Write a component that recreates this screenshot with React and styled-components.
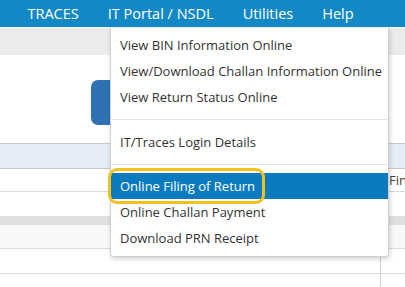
import React from "react";
import styled, { createGlobalStyle } from "styled-components";

const Global = createGlobalStyle`
  html, body { margin: 0; padding: 0; background: #fff; }
  body { font-family: "Open Sans", "Noto Sans", Arial, sans-serif; overflow: hidden; }
  #root { width: 405px; height: 287px; position: relative; overflow: hidden; }
`;

const Page = styled.div`
  position: relative;
  width: 405px;
  height: 287px;
  overflow: hidden;
`;

const NavBar = styled.nav`
  height: 27px;
  background: #1289c5;
  display: flex;
  align-items: center;
  padding-left: 13px;
  border-bottom: 1px solid #f4f4f4;
`;

const NavItem = styled.span`
  color: #fff;
  font-size: 14.5px;
  padding: 0 14.5px;
  line-height: 27px;
  white-space: nowrap;
`;

const SubBar = styled.div`
  height: 27px;
  background: #ebebeb;
`;

const Hero = styled.div`
  height: 88px;
  display: flex;
  align-items: flex-start;
  padding-top: 25px;
  padding-left: 91px;
  box-sizing: border-box;
`;

const BigButton = styled.div`
  width: 120px;
  height: 45px;
  background: #2f72b3;
  border-radius: 7px;
`;

const Table = styled.div`
  display: flex;
  flex-direction: column;
`;

const Row = styled.div`
  height: ${(p) => p.$h}px;
  background: ${(p) => p.$bg || "#fff"};
  border-bottom: 1px solid ${(p) => p.$line || "#dadada"};
  box-sizing: border-box;
  display: flex;
  border-top: ${(p) => (p.$top ? "1px solid #c8c8c8" : "none")};
`;

const Cell = styled.div`
  flex: ${(p) => (p.$w ? `0 0 ${p.$w}px` : "1")};
  border-right: ${(p) => (p.$divider ? "1px solid #cfcfcf" : "none")};
  font-size: 13px;
  color: #444;
  padding-left: ${(p) => p.$pl || 0}px;
  display: flex;
  align-items: center;
  white-space: nowrap;
  overflow: hidden;
`;

const Gap = styled.div`
  height: 8px;
  background: #e0e0e0;
`;

const Menu = styled.ul`
  position: absolute;
  left: 110px;
  top: 28px;
  width: 279px;
  margin: 0;
  padding: 4px 0 5px;
  list-style: none;
  background: #fff;
  border: 1px solid #d0d0d0;
  border-top: none;
  border-radius: 0 0 4px 4px;
  box-shadow: 1px 2px 5px rgba(0, 0, 0, 0.18);
  box-sizing: border-box;
`;

const MenuItem = styled.li`
  position: relative;
  height: 26px;
  line-height: 26px;
  padding-left: 9px;
  font-size: 13px;
  color: ${(p) => (p.$active ? "#fff" : "#333")};
  background: ${(p) => (p.$active ? "#0b7bc0" : "transparent")};
  white-space: nowrap;
`;

const Divider = styled.li`
  height: 1px;
  background: #e3e3e3;
  margin: ${(p) => p.$m || "9px 0"};
`;

const Callout = styled.span`
  position: absolute;
  left: -3px;
  top: -5px;
  width: 157px;
  height: 36px;
  border: 3px solid #f2c21a;
  border-radius: 9px;
  box-sizing: border-box;
  pointer-events: none;
`;

export default function App() {
  return (
    <Page>
      <Global />
      <NavBar>
        <NavItem>TRACES</NavItem>
        <NavItem>IT Portal / NSDL</NavItem>
        <NavItem>Utilities</NavItem>
        <NavItem>Help</NavItem>
      </NavBar>
      <SubBar />
      <Hero>
        <BigButton />
      </Hero>
      <Table>
        <Row $h={26} $bg="#e4ecf6" $top $line="#c8c8c8">
          <Cell />
        </Row>
        <Row $h={23}>
          <Cell />
          <Cell $w={16} $pl={2}>Fin</Cell>
        </Row>
        <Row $h={25} $line="#e0e0e0">
          <Cell />
        </Row>
        <Gap />
        <Row $h={24} $bg="#f8f8f8">
          <Cell $divider />
          <Cell $w={24} />
        </Row>
        <Row $h={25}>
          <Cell $divider />
          <Cell $w={24} />
        </Row>
        <Row $h={25}>
          <Cell $divider />
          <Cell $w={24} />
        </Row>
      </Table>
      <Menu>
        <MenuItem>View BIN Information Online</MenuItem>
        <MenuItem>View/Download Challan Information Online</MenuItem>
        <MenuItem>View Return Status Online</MenuItem>
        <Divider $m="9px 0 9px" />
        <MenuItem>IT/Traces Login Details</MenuItem>
        <Divider $m="9px 0 8px" />
        <MenuItem $active>
          Online Filing of Return
          <Callout />
        </MenuItem>
        <MenuItem>Online Challan Payment</MenuItem>
        <MenuItem>Download PRN Receipt</MenuItem>
      </Menu>
    </Page>
  );
}
